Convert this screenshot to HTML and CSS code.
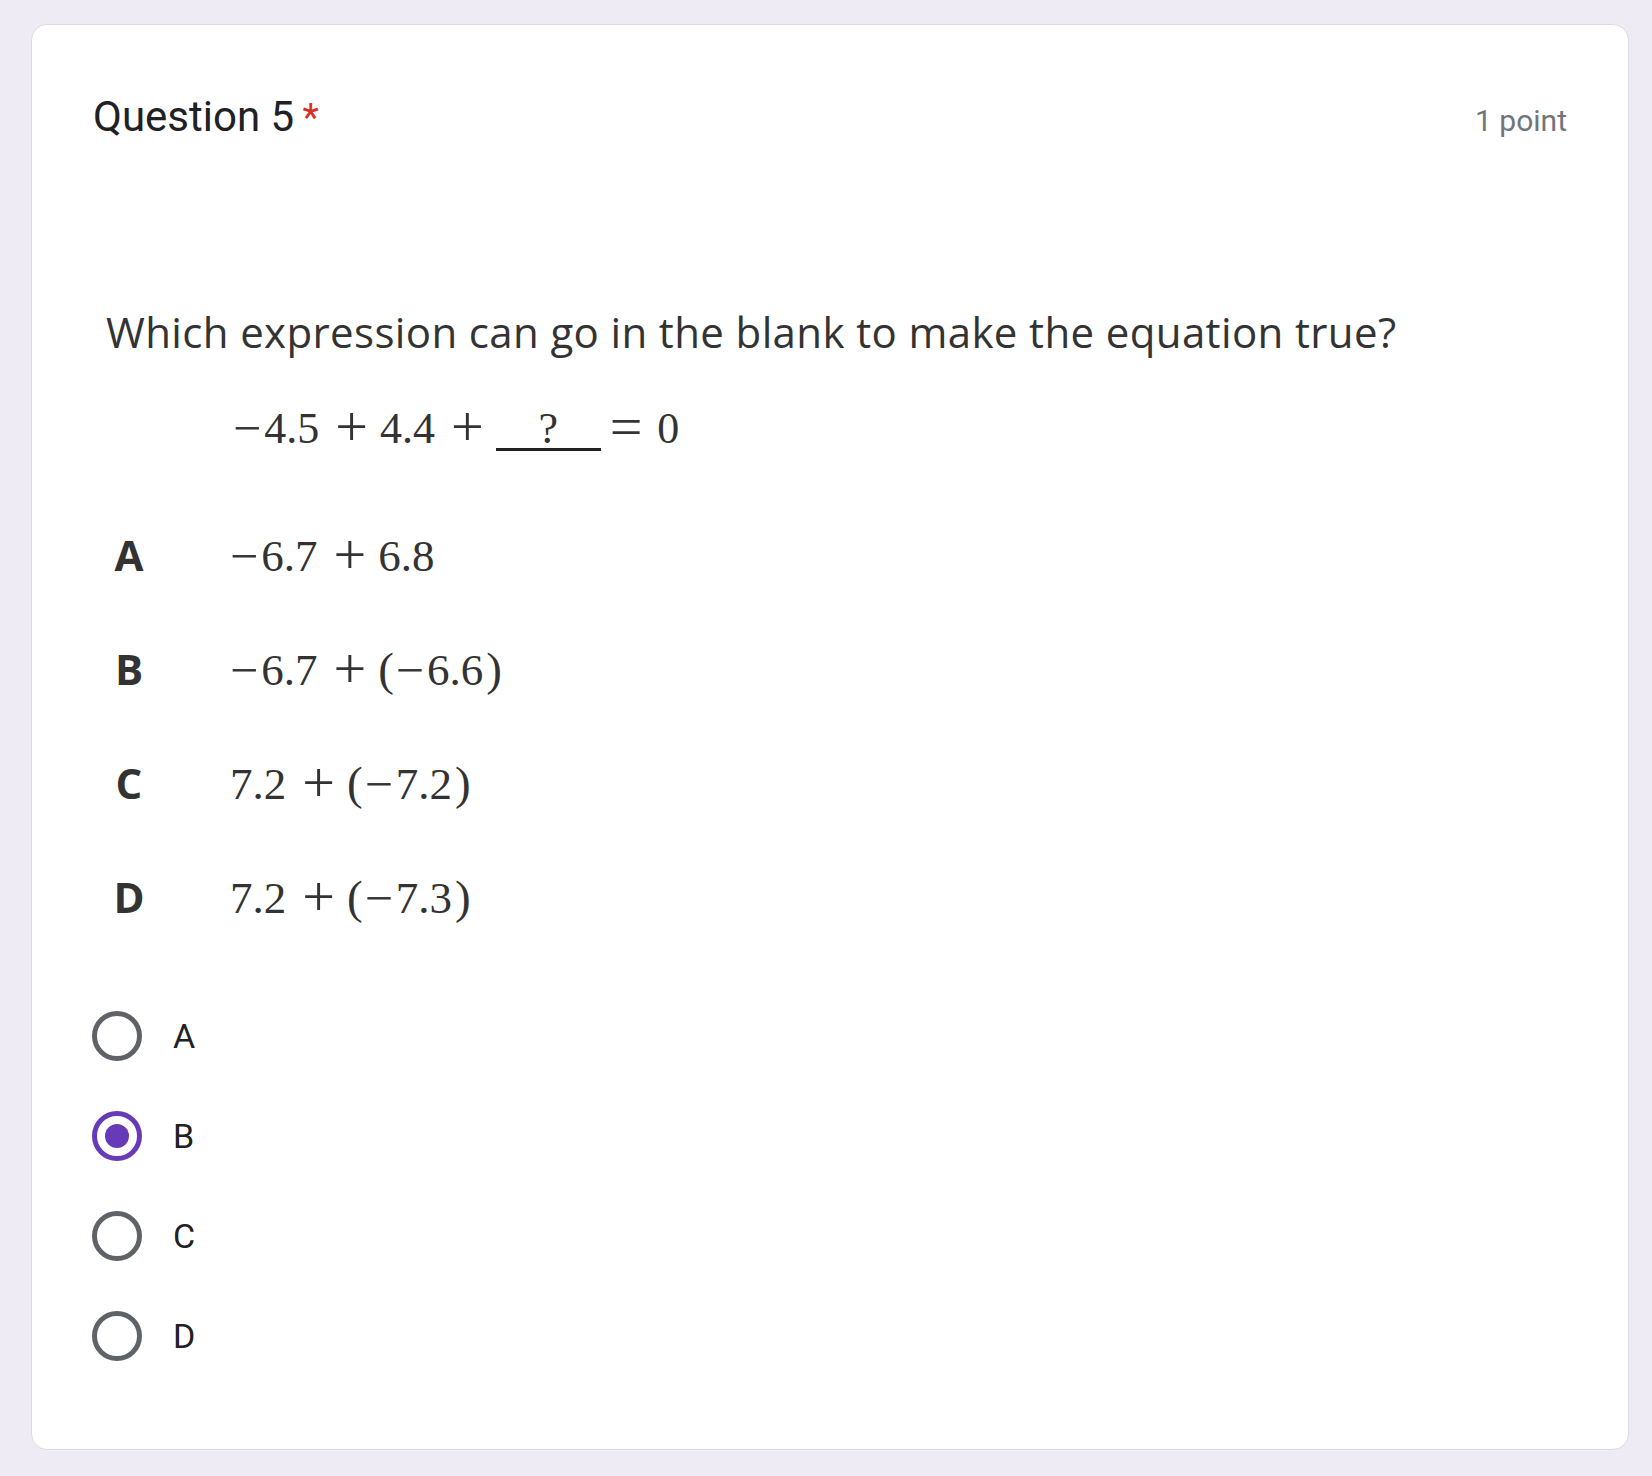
FILE: index.html
```html
<!DOCTYPE html>
<html lang="en">
<head>
<meta charset="utf-8">
<title>Question 5</title>
<link rel="stylesheet" href="styles.css">
</head>
<body>
<div class="card">
  <div class="header">
    <div class="title">Question 5 <span class="req">*</span></div>
    <div class="points">1 point</div>
  </div>

  <div class="figure">
    <p class="prompt">Which expression can go in the blank to make the equation true?</p>
    <div class="equation"><span class="neg first">−</span><span class="num">4.5</span><span class="op">+</span><span class="num">4.4</span><span class="op">+</span><span class="blank">?</span><span class="op eq">=</span><span class="num">0</span></div>

    <div class="choice"><span class="letter">A</span><span class="expr"><span class="neg">−</span><span class="num">6.7</span><span class="op">+</span><span class="num">6.8</span></span></div>
    <div class="choice"><span class="letter">B</span><span class="expr"><span class="neg">−</span><span class="num">6.7</span><span class="op">+</span><span class="paren">(</span><span class="neg">−</span><span class="num">6.6</span><span class="paren">)</span></span></div>
    <div class="choice"><span class="letter">C</span><span class="expr"><span class="num">7.2</span><span class="op">+</span><span class="paren">(</span><span class="neg">−</span><span class="num">7.2</span><span class="paren">)</span></span></div>
    <div class="choice"><span class="letter">D</span><span class="expr"><span class="num">7.2</span><span class="op">+</span><span class="paren">(</span><span class="neg">−</span><span class="num">7.3</span><span class="paren">)</span></span></div>
  </div>

  <div class="options">
    <label class="option"><span class="radio"></span><span class="opt-label">A</span></label>
    <label class="option"><span class="radio checked"></span><span class="opt-label">B</span></label>
    <label class="option"><span class="radio"></span><span class="opt-label">C</span></label>
    <label class="option"><span class="radio"></span><span class="opt-label">D</span></label>
  </div>
</div>
</body>
</html>
```

FILE: styles.css
```css
html, body {
  margin: 0;
  padding: 0;
}

body {
  background: #eeebf5;
  font-family: Roboto, "Liberation Sans", sans-serif;
  color: #202124;
}

.card {
  box-sizing: border-box;
  width: 1598px;
  margin: 24px 0 27px 31px;
  padding: 67px 61px 63px 60px;
  background: #ffffff;
  border: 1px solid #dadce0;
  border-radius: 16px;
}

/* header */
.header {
  display: flex;
  justify-content: space-between;
  align-items: baseline;
  height: 50px;
}

.title {
  font-family: Roboto, "Liberation Sans", sans-serif;
  font-size: 42px;
  line-height: 50px;
  color: #202124;
  padding-left: 1px;
}

.req {
  color: #d93025;
  font-size: 38px;
  margin-left: -2px;
}

.points {
  font-family: Roboto, "Liberation Sans", sans-serif;
  font-size: 30px;
  line-height: 40px;
  color: #70757a;
}

/* figure (question image) */
.figure {
  padding-left: 9px;
  color: #333333;
}

.prompt {
  margin: 165px 0 0 5px;
  font-family: "Open Sans", "Noto Sans", sans-serif;
  font-size: 42px;
  letter-spacing: 0.37px;
  line-height: 50px;
  color: #333333;
  white-space: nowrap;
}

.equation {
  margin: 45px 0 0 132px;
  font-family: "Liberation Serif", "Times New Roman", serif;
  font-size: 44px;
  line-height: 50px;
  white-space: nowrap;
}

.op {
  font-size: 58px;
  vertical-align: -3px;
  margin: 0 12px 0 16px;
}

.op.eq {
  margin: 0 15px 0 9px;
}

.neg {
  font-size: 50px;
  vertical-align: -2px;
  margin-right: 3px;
}

.paren {
  font-size: 47px;
}

.paren + .neg {
  margin-left: 2px;
}

.num + .paren {
  margin-left: 3px;
}

.blank {
  display: inline-block;
  width: 105px;
  line-height: 38px;
  text-align: center;
  border-bottom: 3px solid #222222;
}

.choice {
  display: flex;
  align-items: baseline;
  margin-top: 63px;
  line-height: 50px;
}

.equation + .choice {
  margin-top: 76px;
}

.letter {
  width: 36px;
  margin-left: 10px;
  text-align: center;
  font-family: "Open Sans", "Noto Sans", sans-serif;
  font-weight: 700;
  font-size: 42px;
  line-height: 50px;
  color: #333333;
}

.expr {
  margin-left: 83px;
  font-family: "Liberation Serif", "Times New Roman", serif;
  font-size: 45px;
  line-height: 50px;
  white-space: nowrap;
}

/* radio options */
.options {
  margin-top: 63px;
  display: flex;
  flex-direction: column;
}

.option {
  display: flex;
  align-items: center;
  height: 100px;
}

.radio {
  box-sizing: border-box;
  width: 50px;
  height: 50px;
  border: 5px solid #5f6368;
  border-radius: 50%;
  display: flex;
  align-items: center;
  justify-content: center;
  flex: none;
}

.radio.checked {
  border-color: #673ab7;
}

.radio.checked::after {
  content: "";
  width: 24px;
  height: 24px;
  border-radius: 50%;
  background: #673ab7;
}

.opt-label {
  margin-left: 31px;
  font-family: Roboto, "Liberation Sans", sans-serif;
  font-size: 34px;
  line-height: 40px;
  color: #202124;
}
```
